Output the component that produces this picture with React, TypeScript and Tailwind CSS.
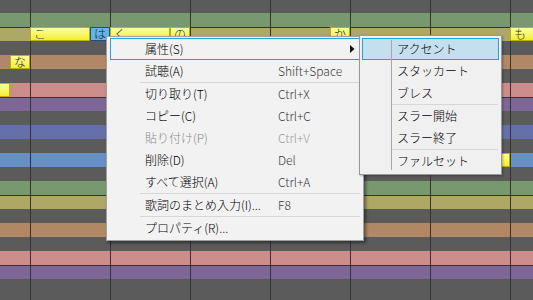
const ROW_CLASS: Record<string, string> = {
  gray: "h-[14px] bg-[#5b5b5b]",
  green: "h-[14px] bg-[#789870]",
  yellow: "h-[14px] bg-[#aea866] border-t border-[#333333]",
  brown: "h-[14px] bg-[#b08866]",
  pink: "h-[14px] bg-[#cc8c8a]",
  purple: "h-[14px] bg-[#7e6796] border-t border-[#333333]",
  bluep: "h-[14px] bg-[#6570aa]",
  blue: "h-[14px] bg-[#6690c4]",
}

const OCTAVE = ["green", "yellow", "gray", "brown", "gray", "pink", "purple", "gray", "bluep", "gray", "blue", "gray"]
const rows = [...OCTAVE, ...OCTAVE].slice(0, 20)

const LINES = [
  "left-[30px]",
  "left-[110px]",
  "left-[190px]",
  "left-[270px]",
  "left-[350px]",
  "left-[430px]",
  "left-[510px]",
]

const YELLOW = "border border-[#c2ae00] bg-gradient-to-b from-[#ffff96] to-[#f2ee2a] text-[#1d1d3a]"

const notes = [
  { text: "こ", cls: "left-[30px] top-[27px] w-[60px] " + YELLOW },
  { text: "は", cls: "left-[90px] top-[27px] w-[20px] border border-[#1e4f7e] bg-[#62b6e6] text-[#1d1d3a]" },
  { text: "く", cls: "left-[110px] top-[27px] w-[60px] " + YELLOW },
  { text: "の", cls: "left-[170px] top-[27px] w-[20px] " + YELLOW },
  { text: "か", cls: "left-[330px] top-[27px] w-[20px] " + YELLOW },
  { text: "も", cls: "left-[510px] top-[27px] w-[40px] " + YELLOW },
  { text: "な", cls: "left-[10px] top-[55px] w-[20px] " + YELLOW },
  { text: "", cls: "left-[-10px] top-[83px] w-[20px] " + YELLOW },
  { text: "", cls: "left-[470px] top-[153px] w-[40px] " + YELLOW },
]

type Item =
  | { sep: true }
  | { sep?: false; label: string; key?: string; disabled?: boolean; active?: boolean; arrow?: boolean }

const mainItems: Item[] = [
  { label: "属性(S)", active: true, arrow: true },
  { label: "試聴(A)", key: "Shift+Space" },
  { sep: true },
  { label: "切り取り(T)", key: "Ctrl+X" },
  { label: "コピー(C)", key: "Ctrl+C" },
  { label: "貼り付け(P)", key: "Ctrl+V", disabled: true },
  { label: "削除(D)", key: "Del" },
  { label: "すべて選択(A)", key: "Ctrl+A" },
  { sep: true },
  { label: "歌詞のまとめ入力(I)...", key: "F8" },
  { sep: true },
  { label: "プロパティ(R)..." },
]

const subItems: Item[] = [
  { label: "アクセント", active: true },
  { label: "スタッカート" },
  { label: "ブレス" },
  { sep: true },
  { label: "スラー開始" },
  { label: "スラー終了" },
  { sep: true },
  { label: "ファルセット" },
]

function MainMenu() {
  return (
    <div className="absolute left-[106px] top-[36px] w-[258px] border border-[#a0a0a0] bg-[#f2f2f2] px-[3px] py-[1px] shadow-[2px_2px_3px_rgba(0,0,0,0.45)]">
      {mainItems.map((it, i) =>
        it.sep ? (
          <div key={i} className="ml-[30px] h-px bg-[#d7d7d7]" />
        ) : (
          <div
            key={i}
            className={
              it.active
                ? "relative flex h-[22px] items-center border border-[#26a0da] pl-[34px]"
                : "relative flex h-[22px] items-center pl-[35px]"
            }
          >
            <span className={it.disabled ? "w-[133px] text-[#8a8a8a]" : "w-[133px] text-black"}>{it.label}</span>
            {it.key && <span className={it.disabled ? "text-[#9a9a9a]" : "text-[#3a3a3a]"}>{it.key}</span>}
            {it.arrow && (
              <svg className="absolute right-[4px] top-[6px]" width="5" height="8" viewBox="0 0 5 8">
                <path d="M0 0 L4.5 4 L0 8 Z" fill="#111" />
              </svg>
            )}
          </div>
        )
      )}
    </div>
  )
}

function SubMenu() {
  return (
    <div className="absolute left-[359px] top-[35px] w-[143px] border border-[#999999] bg-[#f0f0f0] p-[2px] shadow-[1px_1px_2px_rgba(0,0,0,0.3)]">
      <div className="pointer-events-none absolute left-[31px] top-[4px] z-10 h-[130px] w-px bg-[#a8a8a8]" />
      {subItems.map((it, i) =>
        it.sep ? (
          <div key={i} className="ml-[30px] mr-px h-px bg-[#d7d7d7]" />
        ) : (
          <div
            key={i}
            className={
              it.active
                ? "flex h-[22px] items-center border border-[#26a0da] bg-[#c4dfee] pl-[34px]"
                : "flex h-[22px] items-center pl-[35px]"
            }
          >
            <span className="text-black">{it.label}</span>
          </div>
        )
      )}
    </div>
  )
}

export default function App() {
  return (
    <div className="relative h-[300px] w-[533px] overflow-hidden bg-[#5b5b5b] font-['Noto_Sans_CJK_JP','Noto_Sans',sans-serif] text-[12px] font-light leading-none">
      <div className="flex flex-col">
        <div className="h-[13px] bg-[#5b5b5b]" />
        {rows.map((r, i) => (
          <div key={i} className={ROW_CLASS[r]} />
        ))}
      </div>

      {LINES.map((l) => (
        <div key={l} className={"absolute top-0 h-[300px] w-px bg-[#333333] " + l} />
      ))}

      {notes.map((n, i) => (
        <div key={i} className={"absolute flex h-[14px] items-center pl-[3px] text-[12px] leading-[12px] " + n.cls}>
          {n.text}
        </div>
      ))}

      <MainMenu />
      <SubMenu />
    </div>
  )
}
